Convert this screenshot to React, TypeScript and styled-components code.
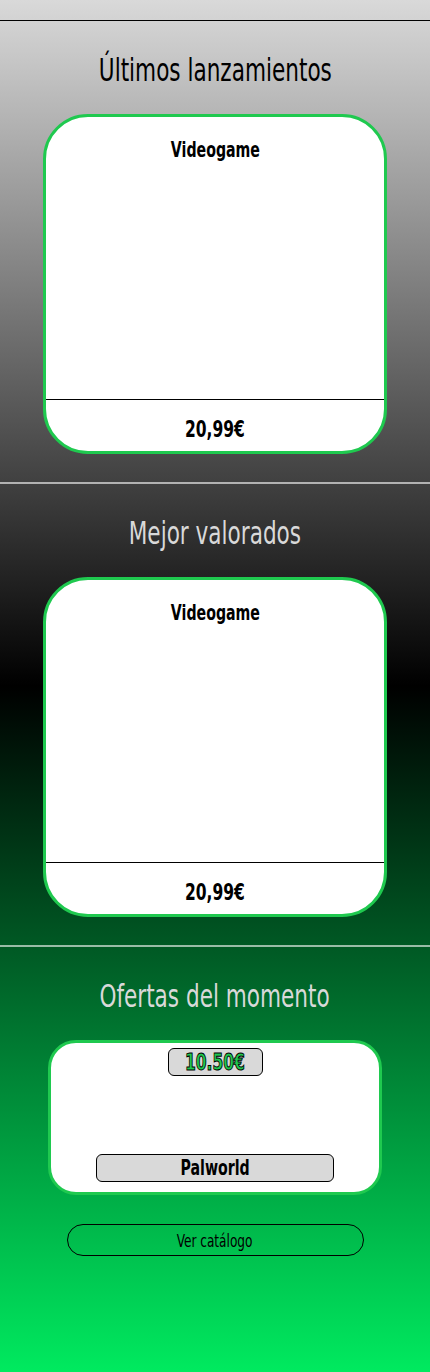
import React from "react";
import styled, { createGlobalStyle } from "styled-components";

const GlobalStyle = createGlobalStyle`
  html, body {
    margin: 0;
    padding: 0;
  }
  body {
    font-family: "DejaVu Sans Condensed", "DejaVu Sans", sans-serif;
  }
  * { box-sizing: border-box; }
`;

const Page = styled.div`
  min-height: 1372px;
  background: linear-gradient(180deg, #d9d9d9 0%, #000000 50%, #00ea5f 100%);
  font-family: "DejaVu Sans Condensed", "DejaVu Sans", sans-serif;
`;

const Narrow = styled.span`
  display: inline-block;
  white-space: nowrap;
  transform: scaleX(0.75);
`;

const Header = styled.header`
  height: 21px;
  border-bottom: 1px solid #000;
`;

const Section = styled.section<{ $divider?: boolean }>`
  display: flex;
  flex-direction: column;
  align-items: center;
  padding: 27px 0 ${(p) => (p.$divider ? "28px" : "0")};
  border-bottom: ${(p) => (p.$divider ? "2px solid rgba(255,255,255,0.6)" : "none")};
`;

const SectionTitle = styled.h2<{ $light?: boolean }>`
  margin: 0 0 22px;
  font-size: 32px;
  line-height: 44px;
  font-weight: 400;
  color: ${(p) => (p.$light ? "#d9d9d9" : "#000")};
  text-align: center;
`;

const GameCard = styled.article`
  width: 344px;
  height: 340px;
  background: #fff;
  border: 3px solid #1fc94f;
  border-radius: 45px;
  display: flex;
  flex-direction: column;
  overflow: hidden;
`;

const GameName = styled.div`
  flex: 1;
  padding-top: 20px;
  font-size: 21px;
  line-height: 26px;
  font-weight: 700;
  color: #000;
  text-align: center;
`;

const GamePrice = styled.div`
  height: 52px;
  border-top: 1px solid #000;
  padding-top: 16px;
  font-size: 23px;
  line-height: 26px;
  font-weight: 700;
  color: #000;
  text-align: center;
`;

const OfferCard = styled.article`
  width: 334px;
  height: 155px;
  background: #fff;
  border: 3px solid #1fc94f;
  border-radius: 28px;
  display: flex;
  flex-direction: column;
  align-items: center;
  justify-content: space-between;
  padding: 5px 0 10px;
`;

const OfferPrice = styled.div`
  width: 95px;
  height: 28px;
  background: #d9d9d9;
  border: 1px solid #000;
  border-radius: 6px;
  display: flex;
  align-items: center;
  justify-content: center;
  font-size: 23px;
  font-weight: 700;
  color: #1fc94f;
  -webkit-text-stroke: 1px #000;
`;

const OfferName = styled.div`
  width: 238px;
  height: 28px;
  background: #d9d9d9;
  border: 1px solid #000;
  border-radius: 6px;
  display: flex;
  align-items: center;
  justify-content: center;
  font-size: 21px;
  font-weight: 700;
  color: #000;
`;

const CatalogButton = styled.button`
  margin-top: 29px;
  width: 297px;
  height: 32px;
  background: transparent;
  border: 1px solid #000;
  border-radius: 16px;
  font-family: inherit;
  font-size: 18px;
  color: #000;
  cursor: pointer;
  padding: 0;
`;

const games = [
  { title: "Últimos lanzamientos", light: false },
  { title: "Mejor valorados", light: true },
];

export default function App() {
  return (
    <>
      <GlobalStyle />
      <Page>
        <Header />
        {games.map((g) => (
          <Section key={g.title} $divider>
            <SectionTitle $light={g.light}>
              <Narrow>{g.title}</Narrow>
            </SectionTitle>
            <GameCard>
              <GameName>
                <Narrow>Videogame</Narrow>
              </GameName>
              <GamePrice>
                <Narrow>20,99€</Narrow>
              </GamePrice>
            </GameCard>
          </Section>
        ))}
        <Section>
          <SectionTitle $light>
            <Narrow>Ofertas del momento</Narrow>
          </SectionTitle>
          <OfferCard>
            <OfferPrice>
              <Narrow>10.50€</Narrow>
            </OfferPrice>
            <OfferName>
              <Narrow>Palworld</Narrow>
            </OfferName>
          </OfferCard>
          <CatalogButton>
            <Narrow>Ver catálogo</Narrow>
          </CatalogButton>
        </Section>
      </Page>
    </>
  );
}
